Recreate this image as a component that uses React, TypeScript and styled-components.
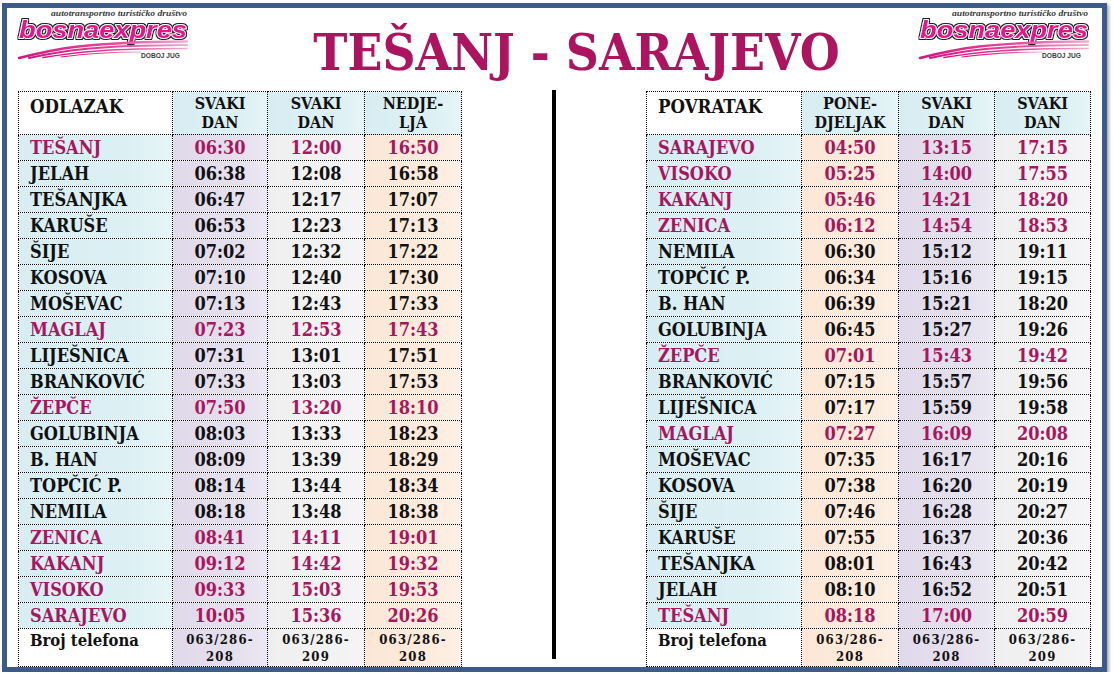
import React from 'react';
import styled, { createGlobalStyle } from 'styled-components';

type Tone = 'white' | 'blue' | 'lilac' | 'grey' | 'peach';

interface Stop {
    name: string;
    times: string[];
    hl?: boolean;
}

interface Timetable {
    title: string;
    heads: string[][];
    tones: Tone[];
    stops: Stop[];
    phones: string[];
    widths: number[];
}

const SERIF = `"DejaVu Serif Condensed", "DejaVu Serif", "Liberation Serif", serif`;
const MAGENTA = '#a8165e';

const GlobalStyle = createGlobalStyle`
    html, body {
        margin: 0;
        padding: 0;
        background: #ffffff;
    }
    body {
        font-family: ${SERIF};
        color: #111111;
    }
`;

const toneBg: Record<Tone, string> = {
    white: '#ffffff',
    blue: 'linear-gradient(90deg, #d8edf2 0%, #dcf0f4 70%, #e6f4f7 100%)',
    lilac: 'linear-gradient(90deg, #e0d9ea 0%, #e5e0ed 70%, #ece8f2 100%)',
    grey: 'linear-gradient(90deg, #efeff0 0%, #f2f2f3 70%, #f5f5f7 100%)',
    peach: 'linear-gradient(90deg, #fce7d6 0%, #fdebdd 70%, #fdf0e6 100%)',
};

const Frame = styled.div`
    box-sizing: border-box;
    width: 1105px;
    height: 669px;
    margin: 3px 0 0 2px;
    border: 5px solid #3d5b88;
    box-shadow: 2px 2px 3px rgba(0, 0, 0, 0.35);
    display: flex;
    flex-direction: column;
`;

const Header = styled.div`
    display: flex;
    align-items: flex-start;
    justify-content: space-between;
    height: 82px;
    padding: 1px 8px 0 8px;
`;

const Title = styled.h1`
    margin: 0;
    padding: 18px 0 0 44px;
    flex: 1;
    text-align: center;
    font-family: ${SERIF};
    font-weight: 700;
    font-size: 51px;
    line-height: 1;
    color: #ad1460;
`;

const Body = styled.div`
    display: flex;
    align-items: flex-start;
    gap: 90px;
    padding: 0 11px;
`;

const Divider = styled.div`
    width: 6px;
    height: 569px;
    margin-top: -1px;
    background: #000000;
`;

const Table = styled.table<{ $width: number }>`
    width: ${p => p.$width}px;
    border-collapse: collapse;
    table-layout: fixed;
`;

const Row = styled.tr<{ $h: number }>`
    height: ${p => p.$h}px;
`;

const Cell = styled.td<{ $tone: Tone; $hl?: boolean; $name?: boolean }>`
    border: 1px dotted #000000;
    padding: ${p => (p.$name ? '0 0 0 11px' : '0')};
    background: ${p => toneBg[p.$tone]};
    color: ${p => (p.$hl ? MAGENTA : '#111111')};
    text-align: ${p => (p.$name ? 'left' : 'center')};
    font-weight: 700;
    font-size: 18px;
    line-height: 24px;
    white-space: nowrap;
    overflow: hidden;
`;

const HeadCell = styled.td<{ $tone: Tone; $name?: boolean }>`
    border: 1px dotted #000000;
    vertical-align: top;
    padding: ${p => (p.$name ? '3px 0 0 11px' : '2px 0 0 0')};
    background: ${p => toneBg[p.$tone]};
    text-align: ${p => (p.$name ? 'left' : 'center')};
    font-weight: 700;
    font-size: ${p => (p.$name ? '18.5px' : '16px')};
    line-height: ${p => (p.$name ? '24px' : '19px')};
    color: #111111;
`;

const PhoneCell = styled.td<{ $tone: Tone; $name?: boolean }>`
    border: 1px dotted #000000;
    vertical-align: top;
    padding: ${p => (p.$name ? '1px 0 0 11px' : '2px 0 0 0')};
    background: ${p => toneBg[p.$tone]};
    text-align: ${p => (p.$name ? 'left' : 'center')};
    font-weight: 700;
    font-size: ${p => (p.$name ? '16.5px' : '13px')};
    letter-spacing: ${p => (p.$name ? '0' : '1.2px')};
    line-height: ${p => (p.$name ? '22px' : '17px')};
    color: #111111;
`;

const LogoBox = styled.svg`
    display: block;
    width: 178px;
    height: 54px;
    flex: none;
`;

const Logo: React.FC<{ id: string }> = ({ id }) => (
    <LogoBox viewBox="0 0 178 54">
        <defs>
            <linearGradient id={`${id}-swoosh`} x1="0" y1="0" x2="1" y2="0">
                <stop offset="0" stopColor="#d3157f" />
                <stop offset="0.6" stopColor="#e0509f" />
                <stop offset="1" stopColor="#eeb0d2" />
            </linearGradient>
            <filter id={`${id}-outline`} x="-5%" y="-20%" width="110%" height="140%">
                <feMorphology in="SourceAlpha" operator="dilate" radius="1.4" result="grown" />
                <feFlood floodColor="#1b1b1b" />
                <feComposite in2="grown" operator="in" result="edge" />
                <feMerge>
                    <feMergeNode in="edge" />
                    <feMergeNode in="SourceGraphic" />
                </feMerge>
            </filter>
        </defs>
        <text
            x="36"
            y="7"
            fontFamily='"Liberation Serif", serif'
            fontStyle="italic"
            fontWeight="700"
            fontSize="8"
            fill="#3a3a3a"
            textLength="136"
            lengthAdjust="spacingAndGlyphs"
        >
            autotransportno turističko društvo
        </text>
        <text
            x="4"
            y="29"
            fontFamily='"Liberation Sans", Arial, sans-serif'
            fontStyle="italic"
            fontWeight="700"
            fontSize="24"
            fill="#e3168c"
            stroke="#ffffff"
            strokeWidth="1.8"
            strokeLinejoin="round"
            paintOrder="stroke"
            textLength="168"
            lengthAdjust="spacingAndGlyphs"
            filter={`url(#${id}-outline)`}
        >
            bosnaexpres
        </text>
        <g fill="none" stroke={`url(#${id}-swoosh)`} strokeLinecap="round">
            <path d="M4 49 C 40 40, 70 33, 172 32.5" strokeWidth="2.4" />
            <path d="M14 49 C 50 41, 80 36.5, 172 36" strokeWidth="2" />
            <path d="M28 48.5 C 62 43, 92 39.5, 172 39.5" strokeWidth="1.6" />
            <path d="M46 48 C 76 44, 100 43, 126 43" strokeWidth="1.2" />
        </g>
        <text
            x="126"
            y="49"
            fontFamily='"Liberation Sans", Arial, sans-serif'
            fontWeight="700"
            fontSize="6.6"
            fill="#3a3a3a"
        >
            DOBOJ JUG
        </text>
    </LogoBox>
);

const TimetableView: React.FC<{ data: Timetable }> = ({ data }) => {
    const width = data.widths.reduce((a, b) => a + b, 0);
    return (
        <Table $width={width}>
            <colgroup>
                {data.widths.map((w, i) => (
                    <col key={i} style={{ width: w }} />
                ))}
            </colgroup>
            <tbody>
                <Row $h={43}>
                    <HeadCell $tone="white" $name>
                        {data.title}
                    </HeadCell>
                    {data.heads.map((lines, i) => (
                        <HeadCell key={i} $tone="blue">
                            {lines[0]}
                            <br />
                            {lines[1]}
                        </HeadCell>
                    ))}
                </Row>
                {data.stops.map(stop => (
                    <Row $h={26} key={stop.name}>
                        <Cell $tone="blue" $hl={stop.hl} $name>
                            {stop.name}
                        </Cell>
                        {stop.times.map((t, i) => (
                            <Cell key={i} $tone={data.tones[i]} $hl={stop.hl}>
                                {t}
                            </Cell>
                        ))}
                    </Row>
                ))}
                <Row $h={38}>
                    <PhoneCell $tone="white" $name>
                        Broj telefona
                    </PhoneCell>
                    {data.phones.map((ph, i) => (
                        <PhoneCell key={i} $tone={data.tones[i]}>
                            063/286-
                            <br />
                            {ph}
                        </PhoneCell>
                    ))}
                </Row>
            </tbody>
        </Table>
    );
};

const s = (name: string, a: string, b: string, c: string, hl?: boolean): Stop => ({
    name,
    times: [a, b, c],
    hl,
});

const departure: Timetable = {
    title: 'ODLAZAK',
    heads: [
        ['SVAKI', 'DAN'],
        ['SVAKI', 'DAN'],
        ['NEDJE-', 'LJA'],
    ],
    tones: ['lilac', 'grey', 'peach'],
    widths: [154, 95, 97, 97],
    phones: ['208', '209', '208'],
    stops: [
        s('TEŠANJ', '06:30', '12:00', '16:50', true),
        s('JELAH', '06:38', '12:08', '16:58'),
        s('TEŠANJKA', '06:47', '12:17', '17:07'),
        s('KARUŠE', '06:53', '12:23', '17:13'),
        s('ŠIJE', '07:02', '12:32', '17:22'),
        s('KOSOVA', '07:10', '12:40', '17:30'),
        s('MOŠEVAC', '07:13', '12:43', '17:33'),
        s('MAGLAJ', '07:23', '12:53', '17:43', true),
        s('LIJEŠNICA', '07:31', '13:01', '17:51'),
        s('BRANKOVIĆ', '07:33', '13:03', '17:53'),
        s('ŽEPČE', '07:50', '13:20', '18:10', true),
        s('GOLUBINJA', '08:03', '13:33', '18:23'),
        s('B. HAN', '08:09', '13:39', '18:29'),
        s('TOPČIĆ P.', '08:14', '13:44', '18:34'),
        s('NEMILA', '08:18', '13:48', '18:38'),
        s('ZENICA', '08:41', '14:11', '19:01', true),
        s('KAKANJ', '09:12', '14:42', '19:32', true),
        s('VISOKO', '09:33', '15:03', '19:53', true),
        s('SARAJEVO', '10:05', '15:36', '20:26', true),
    ],
};

const arrival: Timetable = {
    title: 'POVRATAK',
    heads: [
        ['PONE-', 'DJELJAK'],
        ['SVAKI', 'DAN'],
        ['SVAKI', 'DAN'],
    ],
    tones: ['peach', 'lilac', 'grey'],
    widths: [155, 97, 96, 96],
    phones: ['208', '208', '209'],
    stops: [
        s('SARAJEVO', '04:50', '13:15', '17:15', true),
        s('VISOKO', '05:25', '14:00', '17:55', true),
        s('KAKANJ', '05:46', '14:21', '18:20', true),
        s('ZENICA', '06:12', '14:54', '18:53', true),
        s('NEMILA', '06:30', '15:12', '19:11'),
        s('TOPČIĆ P.', '06:34', '15:16', '19:15'),
        s('B. HAN', '06:39', '15:21', '18:20'),
        s('GOLUBINJA', '06:45', '15:27', '19:26'),
        s('ŽEPČE', '07:01', '15:43', '19:42', true),
        s('BRANKOVIĆ', '07:15', '15:57', '19:56'),
        s('LIJEŠNICA', '07:17', '15:59', '19:58'),
        s('MAGLAJ', '07:27', '16:09', '20:08', true),
        s('MOŠEVAC', '07:35', '16:17', '20:16'),
        s('KOSOVA', '07:38', '16:20', '20:19'),
        s('ŠIJE', '07:46', '16:28', '20:27'),
        s('KARUŠE', '07:55', '16:37', '20:36'),
        s('TEŠANJKA', '08:01', '16:43', '20:42'),
        s('JELAH', '08:10', '16:52', '20:51'),
        s('TEŠANJ', '08:18', '17:00', '20:59', true),
    ],
};

export default function App() {
    return (
        <>
            <GlobalStyle />
            <Frame>
                <Header>
                    <Logo id="logo-left" />
                    <Title>TEŠANJ - SARAJEVO</Title>
                    <Logo id="logo-right" />
                </Header>
                <Body>
                    <TimetableView data={departure} />
                    <Divider />
                    <TimetableView data={arrival} />
                </Body>
            </Frame>
        </>
    );
}
